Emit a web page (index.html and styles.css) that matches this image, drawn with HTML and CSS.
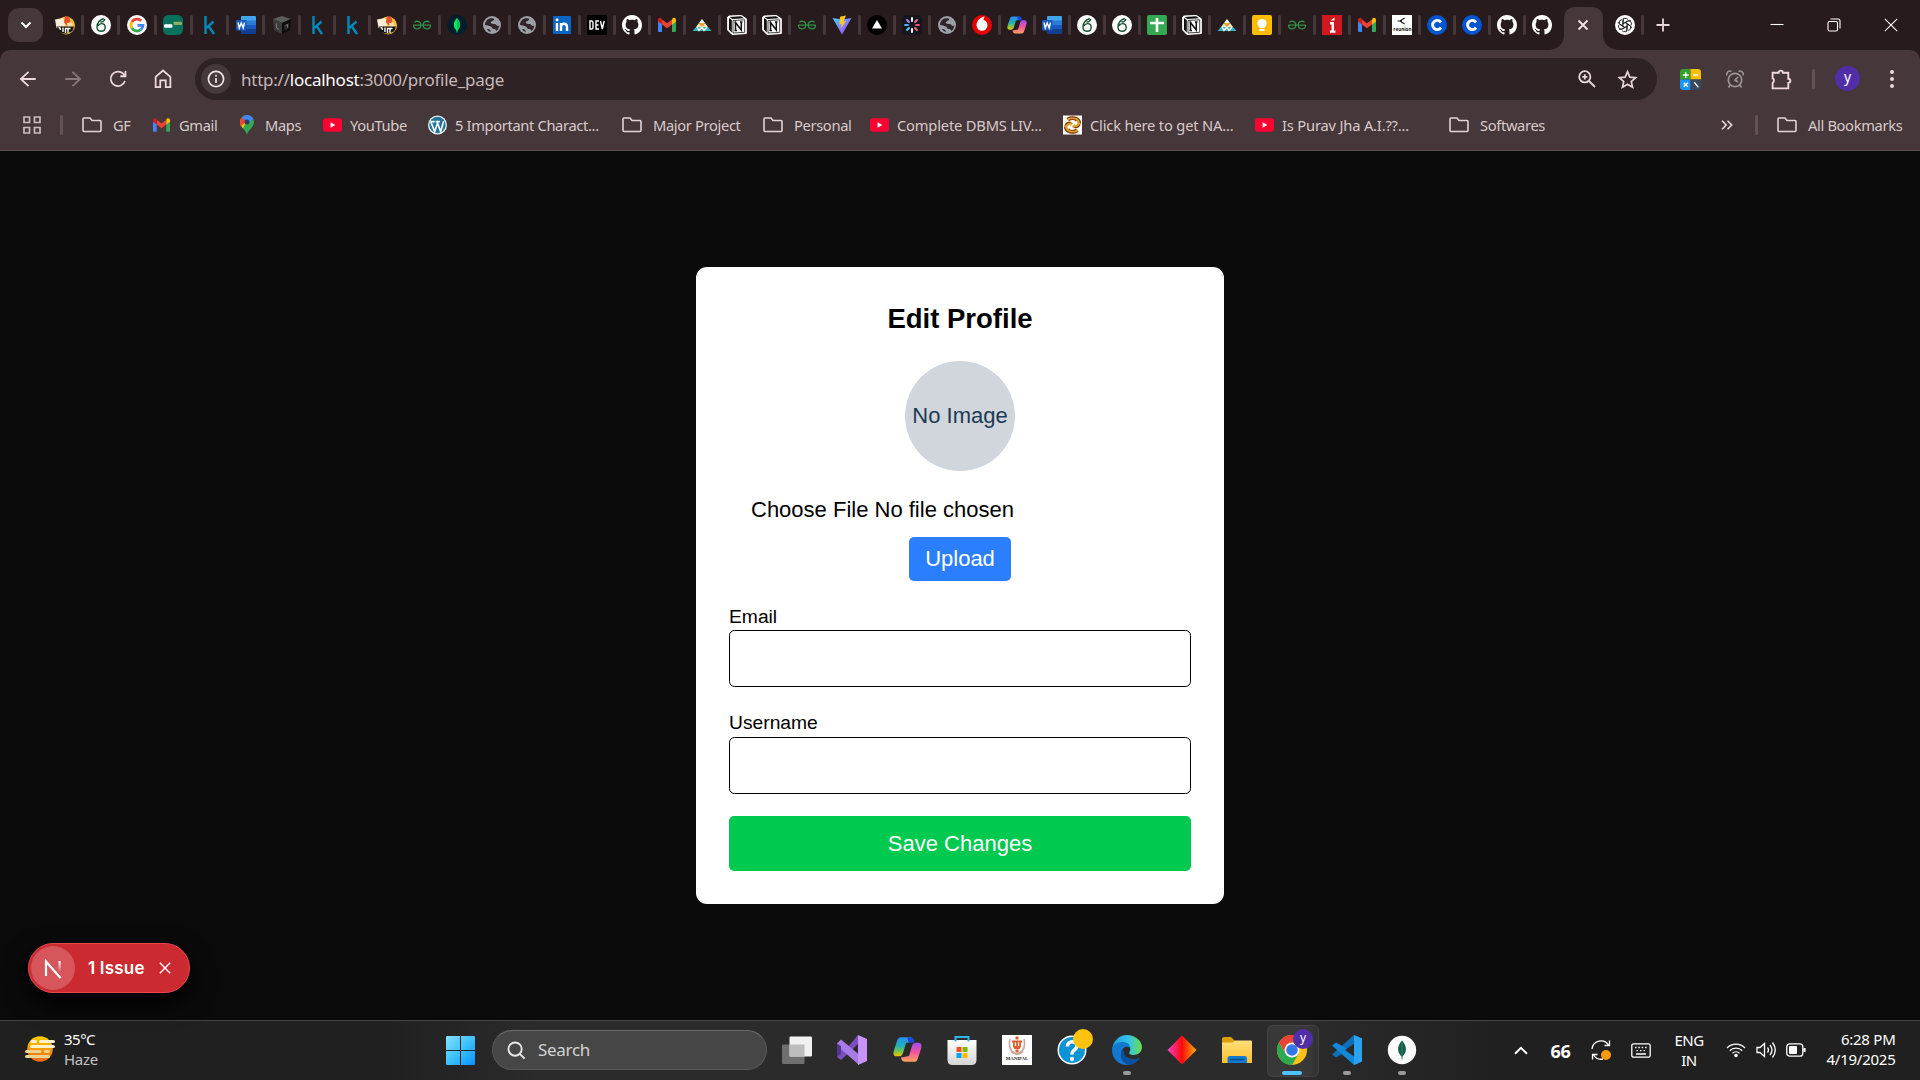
FILE: index.html
```html
<!DOCTYPE html>
<html lang="en">
<head>
<meta charset="utf-8">
<title>Edit Profile</title>
<link rel="stylesheet" href="styles.css">
</head>
<body>
<svg class="sprite" aria-hidden="true">
  <defs>
    <linearGradient id="gCopA" x1="0" y1="0" x2="0" y2="1"><stop offset="0" stop-color="#2a8cf0"/><stop offset=".45" stop-color="#1fb0b8"/><stop offset=".75" stop-color="#7cc24a"/><stop offset="1" stop-color="#f4c800"/></linearGradient>
    <linearGradient id="gCopB" x1="0" y1="0" x2="0" y2="1"><stop offset="0" stop-color="#a04df0"/><stop offset=".5" stop-color="#f0569a"/><stop offset="1" stop-color="#ffa45c"/></linearGradient>
    <linearGradient id="gVite" x1="0" y1="0" x2="1" y2="1"><stop offset="0" stop-color="#41d1ff"/><stop offset="1" stop-color="#bd34fe"/></linearGradient>
    <linearGradient id="gEdge" x1="0" y1="0" x2="1" y2="0"><stop offset="0" stop-color="#1a9fe0"/><stop offset=".55" stop-color="#33c3e8"/><stop offset="1" stop-color="#6be04a"/></linearGradient>
    <linearGradient id="gDia" x1="0" y1="0" x2="1" y2="0"><stop offset="0" stop-color="#ff3fd0"/><stop offset=".5" stop-color="#ff0a0a"/><stop offset="1" stop-color="#ffb000"/></linearGradient>
    <linearGradient id="gWin" x1="0" y1="0" x2="1" y2="1"><stop offset="0" stop-color="#84e0ff"/><stop offset=".5" stop-color="#3cc2fb"/><stop offset="1" stop-color="#0793fb"/></linearGradient>
    <linearGradient id="gFold" x1="0" y1="0" x2="0" y2="1"><stop offset="0" stop-color="#ffe07a"/><stop offset="1" stop-color="#fbc02d"/></linearGradient>
    <linearGradient id="gSun" x1="0" y1="0" x2="0" y2="1"><stop offset="0" stop-color="#ffd000"/><stop offset="1" stop-color="#e8650a"/></linearGradient>
    <linearGradient id="gN" x1="0" y1="0" x2="0" y2="1"><stop offset="0" stop-color="#fff"/><stop offset="1" stop-color="#fff" stop-opacity=".1"/></linearGradient>
    <linearGradient id="gStore" x1="0" y1="0" x2="0" y2="1"><stop offset="0" stop-color="#fff"/><stop offset="1" stop-color="#d5d5d5"/></linearGradient>
    <clipPath id="cPin"><path d="M7 20C6.500 15 0 12.500 0 7a7 7 0 0 1 14 0c0 5.500-6.500 8-7 13z"/></clipPath>
  </defs>
  <symbol id="scout" viewBox="0 0 20 20"><circle cx="11" cy="10.500" r="9" fill="#f5c23a"/><path d="m0 4.500 8-1.500 2.500 7.500-9 2.500z" fill="#f7ecd8"/><path d="M10 1.500h4l1.500 5-3.500 4-3-3z" fill="#e2502c"/><path d="m12 8 4.500-.5 1.500 4-5 1z" fill="#f6dcae"/><path d="M2 11.500h17l-1.500 4.500-5 2.500H8l-5-2z" fill="#171310"/><path d="M3.500 12.500c1.500 0 2 .5 2 2.500M8 12.500v4.500M10.500 18v-4.500h5M13 14v4" stroke="#fff" stroke-width="1.400" fill="none"/></symbol>
  <symbol id="leaf6" viewBox="0 0 20 20"><circle cx="10" cy="10" r="10" fill="#fff"/><path d="M12.800 3.500C8.500 5 6 8.500 6 12c0 2.500 1.500 4.200 4 4.200s4.200-1.700 4.200-4-1.600-3.600-3.600-3.600c-1.500 0-3 1-3.600 2.400M9.500 7c2.500 0 4-1 4.200-3" fill="none" stroke="#14522f" stroke-width="1.400"/></symbol>
  <symbol id="google" viewBox="0 0 20 20"><circle cx="10" cy="10" r="10" fill="#fff"/><g fill="none" stroke-width="2.800"><path d="M14.200 5.800A6 6 0 0 0 4.800 7" stroke="#ea4335"/><path d="M4.800 7a6 6 0 0 0 0 6" stroke="#fbbc05"/><path d="M4.800 13a6 6 0 0 0 9 1.600" stroke="#34a853"/><path d="M13.800 14.600A6 6 0 0 0 16 10.400H10.500" stroke="#4285f4"/></g></symbol>
  <symbol id="teal" viewBox="0 0 20 20"><rect width="20" height="20" rx="5.500" fill="#08705c"/><rect x="1" y="9.300" width="8.500" height="3.400" rx="1.200" fill="#fff"/><rect x="10.500" y="6.700" width="8.500" height="3.200" rx="1.200" fill="#8fae63"/></symbol>
  <symbol id="kk" viewBox="0 0 20 20"><path d="M6.500 1v18M14.500 6.500l-7 6.300M9.500 11l5.500 8" fill="none" stroke="#008abc" stroke-width="2.400"/></symbol>
  <symbol id="word" viewBox="0 0 20 20"><path d="M6 1h13a1 1 0 0 1 1 1v4H5V2a1 1 0 0 1 1-1z" fill="#41a5ee"/><path d="M5 5.500h15V10H5z" fill="#2b7cd3"/><path d="M5 10h15v4.500H5z" fill="#185abd"/><path d="M5 14.500h15V18a1 1 0 0 1-1 1H6a1 1 0 0 1-1-1z" fill="#103f91"/><rect y="5" width="10.500" height="10.500" rx="1" fill="#185abd"/><path d="m2 7.500 1.300 5.500L5.200 8l2 5L8.500 7.500" fill="none" stroke="#fff" stroke-width="1.400"/></symbol>
  <symbol id="cube" viewBox="0 0 20 20"><path d="m10 1 9 3-9 4-9-4z" fill="#5c5c5c"/><path d="m1 4 9 4v11l-8-4z" fill="#3c3c3c"/><path d="m19 4-9 4v11l8-4z" fill="#0c0c0c"/><path d="m12 10 5-2v5l-5 2.500z" fill="#2c2c2c"/><path d="M4.500 8.500v4.500l2.500 1.500M13.500 10.500l2-1v3" stroke="#858585" stroke-width=".8" fill="none"/></symbol>
  <symbol id="gfg" viewBox="0 0 20 20"><path d="M1 10.200h18M2.500 7.400C4 5.700 8.800 5.500 8.800 10c0 4.700-6.800 5.200-7.300 .5M17.500 7.400C16 5.700 11.200 5.500 11.200 10c0 4.700 6.800 5.200 7.300 .5" fill="none" stroke="#2f8d46" stroke-width="1.300"/></symbol>
  <symbol id="mongo" viewBox="0 0 20 20"><circle cx="10" cy="10" r="10" fill="#001e2b"/><path d="M10 3c4 4 4.500 9 0 13-4.500-4-4-9 0-13z" fill="#00ed64"/><path d="M10 4c3.300 4 3.800 8 0 11z" fill="#00b850"/><path d="M10 12v5.500" stroke="#00ed64"/></symbol>
  <symbol id="globe" viewBox="0 0 20 20"><circle cx="10" cy="10" r="9" fill="#9aa0a6"/><path d="M8.800 3.300c3.200-.3 4.500 1 2.500 2.200C9.500 6.500 8 6.800 9.200 8.300c1.500 1.500 4-.3 5 1.500s2.500 1 3 .5c0 2.500-1 4.500-3 5.700-.5-1.700-1.200-2-2.500-2-1.700 0-1.500-2-3-2.500-1.800-.7-3-1.500-5.700-1.500C3 6.500 5.500 3.700 8.800 3.300zM5 14c2 0 3.500 .5 4 2.800C7 16.700 5.800 15.500 5 14z" fill="#32252a"/></symbol>
  <symbol id="linkedin" viewBox="0 0 20 20"><rect x="1" y="1" width="18" height="18" rx="1" fill="#0a66c2"/><path d="M5 8v8M9 16V8M9 12c0-4.500 6-4 6 0v4" fill="none" stroke="#fff" stroke-width="2.400"/><circle cx="5" cy="4.800" r="1.500" fill="#fff"/></symbol>
  <symbol id="dev" viewBox="0 0 20 20"><rect width="20" height="20" rx="1" fill="#000"/><path d="M3 6v8h1.500q1.500 0 1.500-1.500v-5Q6 6 4.500 6zM12 6H9v8h3M9 10h2.500M13.500 6l1.800 8L17.200 6" fill="none" stroke="#fff" stroke-width="1.400"/></symbol>
  <symbol id="github" viewBox="0 0 16 16"><path fill="#fff" d="M8 0C3.580 0 0 3.580 0 8c0 3.540 2.290 6.530 5.470 7.590.4.070.55-.17.55-.38 0-.19-.01-.82-.01-1.490-2.010.37-2.530-.49-2.690-.94-.09-.23-.48-.94-.82-1.130-.28-.15-.68-.52-.01-.53.63-.01 1.080.58 1.230.82.720 1.210 1.870.87 2.330.66.070-.52.280-.87.510-1.070-1.780-.2-3.640-.89-3.640-3.950 0-.87.310-1.590.82-2.150-.08-.2-.36-1.020.08-2.120 0 0 .67-.21 2.200.82.640-.18 1.320-.27 2-.27s1.360.09 2 .27c1.530-1.040 2.200-.82 2.200-.82.440 1.100.160 1.920.080 2.120.510.560.820 1.270.820 2.150 0 3.070-1.870 3.750-3.650 3.950.290.250.540.730.540 1.480 0 1.070-.01 1.930-.01 2.200 0 .210.150.460.550.380A8.010 8.010 0 0 0 16 8c0-4.420-3.580-8-8-8z"/></symbol>
  <symbol id="gmail" viewBox="0 0 20 20"><path d="M1 5v11a1 1 0 0 0 1 1h3V8z" fill="#4285f4"/><path d="M19 5v11a1 1 0 0 1-1 1h-3V8z" fill="#34a853"/><path d="M15 4.500v5l4-3V5c0-2-2-2.700-3.300-1.700z" fill="#fbbc04"/><path d="m5 4.500 5 3.800 5-3.800v5l-5 3.800-5-3.800z" fill="#ea4335"/><path d="M1 5v1.500l4 3v-5l-.7-1.200C3 2.300 1 3 1 5z" fill="#c5221f"/></symbol>
  <symbol id="pyramid" viewBox="0 0 20 20"><path d="m10 4 3 4H7z" fill="#e8f7fb"/><path d="m7 8 3 4H4zM13 8l3 4h-6z" fill="#ffe3b8"/><path d="M7 8h6l-3 4z" fill="#f7a832"/><path d="M4 12h12l3.500 4H.5z" fill="#2fb5c8"/><path d="m5 12 2 3.500 3-3.500 2 3.500 3-3.500" stroke="#fff3dc" fill="none" stroke-width="1.400"/></symbol>
  <symbol id="notion" viewBox="0 0 20 20"><path d="M2 1 14.500.5 19.300 3.800V18.500L5 19.500 .7 15V2z" fill="#fff" stroke="#fff"/><path d="M2.500 2 14 1.300l3 2L5.500 4zM2 3l2.800 2v12.500L2 14.700z" fill="#111"/><path d="M6 5.500 17.700 4.800V17.300L6 18z" fill="#fff" stroke="#111" stroke-width=".8"/><path d="M8.500 15.500v-8l5.800 7.500V7M7.500 7.600h2M7.500 15.600h2.500M13 7h2.500" fill="none" stroke="#111" stroke-width="1.500"/></symbol>
  <symbol id="vite" viewBox="0 0 20 20"><path d="M.5 3 10 19.500 19.500 3l-9 1.500z" fill="url(#gVite)"/><path d="m14 .5-6 1.200-.6 7.800 2.300-.5-.8 4.500 5.300-7.500-2.700.5z" fill="#ffc71f"/></symbol>
  <symbol id="vercel" viewBox="0 0 20 20"><circle cx="10" cy="10" r="10" fill="#000"/><path d="m10 5 5 8.500H5z" fill="#fff"/></symbol>
  <symbol id="spark" viewBox="0 0 20 20"><rect width="20" height="20" rx="5" fill="#14171d"/><g stroke-width="1.900" stroke-linecap="round"><path d="M10 3v3" stroke="#fff"/><path d="m15 5-2 2" stroke="#f06a9b"/><path d="M17 10h-3" stroke="#fb4b74"/><path d="m15 15-2-2" stroke="#ff6b6b"/><path d="M10 17v-3" stroke="#fff"/><path d="m5 15 2-2" stroke="#4ec9f5"/><path d="M3 10h3" stroke="#58a6ff"/><path d="m5 5 2 2" stroke="#b388ff"/></g></symbol>
  <symbol id="voda" viewBox="0 0 20 20"><circle cx="10" cy="10" r="10" fill="#e60000"/><path d="M12.800 1.500C9 2 4.500 5.500 4.500 10.300a5.500 5.500 0 0 0 11 0c0-3-2-5-4-5.400 0-1.200.6-2.500 1.300-3.400z" fill="#fff"/></symbol>
  <symbol id="copilot" viewBox="0 0 20 20"><path d="M5.500 1.500h6c2 0 2.500 1 3 3L9 5.500 7 12c-.6 2-1.500 2.700-3 2.700H2.500C.5 14.700 0 13 .5 11L3 3.500c.4-1.300 1.200-2 2.500-2z" fill="url(#gCopA)"/><path d="M14.500 18.500h-6c-2 0-2.500-1-3-3l5.500-1L13 8c.6-2 1.500-2.700 3-2.700h1.500c2 0 2.500 1.700 2 3.700L17 16.500c-.4 1.300-1.200 2-2.500 2z" fill="url(#gCopB)"/><path d="M10 1.500h2c2 0 2.300 2 3 4-2-.3-3.500.5-4.500-1z" fill="#1849d8"/></symbol>
  <symbol id="sheets" viewBox="0 0 20 20"><rect width="20" height="20" rx="2" fill="#34a853"/><path d="M10 3v14M3 8h14" stroke="#fff" stroke-width="2.600"/></symbol>
  <symbol id="keep" viewBox="0 0 20 20"><rect width="20" height="20" rx="2" fill="#fbbc04"/><circle cx="10" cy="8.500" r="4.600" fill="#fff"/><path d="M7.500 10h5v2.800h-5zM7.500 14h5v2h-5z" fill="#fff"/></symbol>
  <symbol id="redi" viewBox="0 0 20 20"><rect width="20" height="20" fill="#cf1820"/><path d="M8 8.300h2.800V17M8 16.600h5.500" stroke="#fff" stroke-width="2.400" fill="none"/><path d="m8.500 5.500 4-3v3z" fill="#fff"/></symbol>
  <symbol id="cblue" viewBox="0 0 20 20"><circle cx="10" cy="10" r="10" fill="#0056d2"/><path d="M14 7.400a4.600 4.600 0 1 0 0 5.200" stroke="#fff" stroke-width="2.900" fill="none"/></symbol>
  <symbol id="gpt" viewBox="0 0 20 20"><circle cx="10" cy="10" r="10" fill="#fff"/><g fill="none" stroke="#111" stroke-width=".85"><path id="petal" d="M7.800 11.400V6.200a2.900 2.900 0 0 1 5.300-1.600M9.300 8.200l4.300-2.400a2.900 2.900 0 0 1 2.300-.2"/><use href="#petal" transform="rotate(60 10 10)"/><use href="#petal" transform="rotate(120 10 10)"/><use href="#petal" transform="rotate(180 10 10)"/><use href="#petal" transform="rotate(240 10 10)"/><use href="#petal" transform="rotate(300 10 10)"/></g></symbol>
  <symbol id="folder" viewBox="0 0 20 16"><path d="M1 2.500V13.500a1 1 0 0 0 1 1H18a1 1 0 0 0 1-1V4.500a1 1 0 0 0-1-1H10L8 1H2A1 1 0 0 0 1 2z" fill="none" stroke="#e2d3d4" stroke-width="1.600"/></symbol>
  <symbol id="youtube" viewBox="0 0 20 14"><rect width="20" height="14" rx="3" fill="#ff0033"/><path d="m8 4 5 3-5 3z" fill="#fff"/></symbol>
  <symbol id="maps" viewBox="0 0 14 20"><g clip-path="url(#cPin)"><path d="M0 0h14v20H0z" fill="#34a853"/><path d="M0 4h8l-6.500 12H0z" fill="#fbbc04"/><path d="M0 0h5l3 5-7 6-1-1z" fill="#ea4335"/><path d="M3 0h11v3.500L8 8 2 3z" fill="#4285f4"/></g><circle cx="7" cy="7" r="2.500" fill="#2d3c63"/></symbol>
  <symbol id="wp" viewBox="0 0 20 20"><circle cx="10" cy="10" r="10" fill="#e8f1f6"/><circle cx="10" cy="10" r="8.600" fill="#21759b"/><path d="m3 6.500 4 10.500L10 8l3.300 9L16.500 6M2.500 6.500H7M8 6.500h4.500" stroke="#fff" stroke-width="1.700" fill="none"/></symbol>
  <symbol id="naac" viewBox="0 0 20 20"><rect width="20" height="20" fill="#fff"/><path d="M4.500 4.500C9 1 16.500 2.500 17 7.500c.3 4-4 5.500-6.500 3M15.500 15.500C11 19 3.500 17.500 3 12.500c-.3-4 4-5.500 6.500-3" fill="none" stroke="#e0a02c" stroke-width="3.600"/><path d="M4 3C9 0 18 1.500 18.500 8M16 17c-5 3-14 1.500-14.500-5M12 12.500c3 1 5-1 5.500-3M8 7.500c-3-1-5 1-5.500 3M6 5.500c3-2 7-1.500 8 .5M14 14.500c-3 2-7 1.500-8-.5" fill="none" stroke="#7c3813" stroke-width="1.100"/></symbol>
</svg>

<header class="browser">
  <div class="tabstrip">
    <div class="tab-search"><svg viewBox="0 0 12 8"><path d="m1.500 1.500 4.500 4.500 4.500-4.500"/></svg></div>
    <div class="tabs tabs-wide">
      <i class="tab"><svg><use href="#scout"/></svg></i><i class="tab"><svg><use href="#leaf6"/></svg></i><i class="tab"><svg><use href="#google"/></svg></i><i class="tab"><svg><use href="#teal"/></svg></i><i class="tab"><svg><use href="#kk"/></svg></i><i class="tab"><svg><use href="#word"/></svg></i><i class="tab"><svg><use href="#cube"/></svg></i>
    </div>
    <div class="tabs">
      <i class="tab"><svg><use href="#kk"/></svg></i><i class="tab"><svg><use href="#kk"/></svg></i><i class="tab"><svg><use href="#scout"/></svg></i><i class="tab"><svg><use href="#gfg"/></svg></i><i class="tab"><svg><use href="#mongo"/></svg></i><i class="tab"><svg><use href="#globe"/></svg></i><i class="tab"><svg><use href="#globe"/></svg></i><i class="tab"><svg><use href="#linkedin"/></svg></i><i class="tab"><svg><use href="#dev"/></svg></i><i class="tab"><svg><use href="#github"/></svg></i><i class="tab"><svg><use href="#gmail"/></svg></i><i class="tab"><svg><use href="#pyramid"/></svg></i><i class="tab"><svg><use href="#notion"/></svg></i><i class="tab"><svg><use href="#notion"/></svg></i><i class="tab"><svg><use href="#gfg"/></svg></i><i class="tab"><svg><use href="#vite"/></svg></i><i class="tab"><svg><use href="#vercel"/></svg></i><i class="tab"><svg><use href="#spark"/></svg></i><i class="tab"><svg><use href="#globe"/></svg></i><i class="tab"><svg><use href="#voda"/></svg></i><i class="tab"><svg><use href="#copilot"/></svg></i><i class="tab"><svg><use href="#word"/></svg></i><i class="tab"><svg><use href="#leaf6"/></svg></i><i class="tab"><svg><use href="#leaf6"/></svg></i><i class="tab"><svg><use href="#sheets"/></svg></i><i class="tab"><svg><use href="#notion"/></svg></i><i class="tab"><svg><use href="#pyramid"/></svg></i><i class="tab"><svg><use href="#keep"/></svg></i><i class="tab"><svg><use href="#gfg"/></svg></i><i class="tab"><svg><use href="#redi"/></svg></i><i class="tab"><svg><use href="#gmail"/></svg></i><i class="tab"><span class="reunion"><svg viewBox="0 0 10 9"><path d="M8 1 2.500 4.500 8 8M0 4.500h5"/></svg>reunion</span></i><i class="tab"><svg><use href="#cblue"/></svg></i><i class="tab"><svg><use href="#cblue"/></svg></i><i class="tab"><svg><use href="#github"/></svg></i><i class="tab tab-last"><svg><use href="#github"/></svg></i>
    </div>
    <div class="tab-active">
      <svg class="tab-shape" viewBox="0 0 72 43"><path d="M0 43c8 0 16-5 16-15V12Q16 0 28 0H43Q55 0 55 12V28c0 10 8 15 17 15z" fill="#46373a"/></svg>
      <svg class="tab-x" viewBox="0 0 12 12"><path d="m1.500 1.500 9 9m0-9-9 9"/></svg>
    </div>
    <i class="tab tab-gpt"><svg><use href="#gpt"/></svg></i>
    <svg class="tab-new" viewBox="0 0 14 14"><path d="M7 .5v13M.5 7h13"/></svg>
    <div class="winctl">
      <svg viewBox="0 0 14 14"><path d="M.5 6.500h13"/></svg>
      <svg viewBox="0 0 14 14"><rect x="1" y="3.500" width="9.500" height="9.500" rx="1.500"/><path d="M3.500 1H11a2 2 0 0 1 2 2v7.500"/></svg>
      <svg viewBox="0 0 14 14"><path d="m.8.8 12.400 12.400m0-12.400L.8 13.200"/></svg>
    </div>
  </div>

  <div class="toolbar">
    <nav class="navbtns">
      <svg viewBox="0 0 20 20"><path d="M17 10H4m6.500-6.500L3.500 10l7 6.500"/></svg>
      <svg class="dim" viewBox="0 0 20 20"><path d="M3 10h13M9.500 3.500l7 6.500-7 6.500"/></svg>
      <svg viewBox="0 0 20 20"><path d="M16.300 11.800A6.600 6.600 0 1 1 14.700 5.200l2 2M16.800 2.800v4.700h-4.700"/></svg>
      <svg viewBox="0 0 20 20"><path d="M3.300 8 10 2.300 16.700 8V17.300h-4.200v-6h-5v6H3.300z"/></svg>
    </nav>
    <div class="omnibox">
      <span class="info"><svg viewBox="0 0 18 18"><circle cx="9" cy="9" r="7.600"/><path d="M9 8v5M9 4.800v1.800"/></svg></span>
      <span class="url">http://<b>localhost</b>:3000/profile_page</span>
      <svg class="obi" viewBox="0 0 20 20"><circle cx="7.800" cy="7.800" r="5.600"/><path d="m12 12 6 6M7.800 5.200v5.200M5.200 7.800h5.200"/></svg>
      <svg class="obi star" viewBox="0 0 20 20"><path d="m10 2.500 2.200 5.200 5.600.5-4.200 3.700 1.200 5.500L10 14.500l-4.800 2.900 1.200-5.500L2.200 8.200l5.600-.5z"/></svg>
    </div>
    <div class="exts">
      <svg class="calc" viewBox="0 0 20 20"><path d="M3 0h7v10H0V3a3 3 0 0 1 3-3z" fill="#34a02c"/><path d="M10 0h7a3 3 0 0 1 3 3v7H10z" fill="#fdbf00"/><path d="M0 10h10v10H3a3 3 0 0 1-3-3z" fill="#1a94f5"/><path d="M10 10h10v7a3 3 0 0 1-3 3h-7z" fill="#37495a"/><path d="M5.500 3v5.500M2.800 5.700h5.500M12.500 5.700h4.800M3.500 13l4 4m0-4-4 4M13.500 12.500l4 5" stroke="#fff" stroke-width="1.300"/></svg>
      <svg class="alarm" viewBox="0 0 20 20"><circle cx="10" cy="11" r="6.700"/><path d="m13 8-3 3 3 2M5.300 16 3.500 18.500M14.700 16l1.800 2.500M1.700 6.500C1 3.500 4 1 6.500 2.500M18.300 6.500C19 3.500 16 1 13.500 2.500"/></svg>
      <svg class="puzzle" viewBox="0 0 22 22"><path d="M2.500 4.500h5.800a2 2 0 0 1 4 0h5.200v5.800a2 2 0 0 1 0 4v5.200h-15v-5.200a2.700 2.700 0 0 0 0-4.600z"/></svg>
      <i class="vsep"></i>
      <span class="avatar">y</span>
      <svg class="kebab" viewBox="0 0 6 20"><circle cx="3" cy="3" r="2"/><circle cx="3" cy="10" r="2"/><circle cx="3" cy="17" r="2"/></svg>
    </div>
  </div>

  <div class="bookmarks">
    <svg class="apps" viewBox="0 0 18 18"><path d="M1 1h5.500v5.500H1zM11.500 1H17v5.500h-5.500zM1 11.500h5.500V17H1zM11.500 11.500H17V17h-5.500z"/></svg>
    <i class="vsep"></i>
    <a class="bm bm-f"><svg class="fi"><use href="#folder"/></svg><span>GF</span></a>
    <a class="bm"><svg class="ic"><use href="#gmail"/></svg><span>Gmail</span></a>
    <a class="bm bm-m"><svg class="mp"><use href="#maps"/></svg><span>Maps</span></a>
    <a class="bm"><svg class="yt"><use href="#youtube"/></svg><span>YouTube</span></a>
    <a class="bm"><svg class="ic"><use href="#wp"/></svg><span>5 Important Charact...</span></a>
    <a class="bm bm-f"><svg class="fi"><use href="#folder"/></svg><span>Major Project</span></a>
    <a class="bm bm-f"><svg class="fi"><use href="#folder"/></svg><span>Personal</span></a>
    <a class="bm bm-long"><svg class="yt"><use href="#youtube"/></svg><span>Complete DBMS LIV...</span></a>
    <a class="bm bm-long"><svg class="ic"><use href="#naac"/></svg><span>Click here to get NA...</span></a>
    <a class="bm bm-long"><svg class="yt"><use href="#youtube"/></svg><span>Is Purav Jha A.I.??...</span></a>
    <a class="bm bm-f"><svg class="fi"><use href="#folder"/></svg><span>Softwares</span></a>
    <svg class="more" viewBox="0 0 12 10"><path d="m1 .8 4.200 4.200L1 9.200M6.500.8 10.700 5 6.500 9.200"/></svg>
    <i class="vsep"></i>
    <a class="bm bm-f"><svg class="fi"><use href="#folder"/></svg><span>All Bookmarks</span></a>
  </div>
</header>

<main class="page">
  <form class="card">
    <h1>Edit Profile</h1>
    <div class="photo">No Image</div>
    <div class="file">Choose File No file chosen</div>
    <button type="button" class="upload">Upload</button>
    <label for="email">Email</label>
    <input id="email" type="email">
    <label for="user" class="second">Username</label>
    <input id="user" type="text">
    <button type="button" class="save">Save Changes</button>
  </form>
  <div class="issue">
    <span class="nmark"><svg viewBox="0 0 18 20"><path d="M2 17V2.500L16.500 19" fill="none" stroke="#fff" stroke-width="2.200"/><rect x="14.500" y="2" width="2.200" height="10" fill="url(#gN)"/></svg></span>
    <span class="itext">1 Issue</span>
    <svg class="ix" viewBox="0 0 12 12"><path d="m.8.8 10.400 10.400m0-10.400L.8 11.200"/></svg>
  </div>
</main>

<footer class="taskbar">
  <div class="weather">
    <svg viewBox="0 0 30 26"><circle cx="15" cy="13" r="12.800" fill="url(#gSun)"/><g stroke-width="3" stroke-linecap="round"><path d="M7 5.500h3.500M15.500 5.500h13M6.500 10.500h22" stroke="#fff0cc"/><path d="M1.500 15.500h13.500M20.500 15.500h3M1.500 20.500h22" stroke="#eed28f"/></g></svg>
    <div class="wtext"><div>35°C</div><div class="haze">Haze</div></div>
  </div>
  <div class="center">
    <svg class="start" viewBox="0 0 29 29"><path d="M0 1q0-1 1-1h13v14H0zM15 0h13q1 0 1 1v13H15zM0 15h14v14H1q-1 0-1-1zM15 15h14v13q0 1-1 1H15z" fill="url(#gWin)"/></svg>
    <div class="search"><svg viewBox="0 0 20 20"><circle cx="8.500" cy="8.500" r="7"/><path d="m13.500 13.500 5 5"/></svg>Search</div>
    <div class="apps-row">
      <span class="app"><svg viewBox="0 0 30 30"><rect y="9.500" width="22.500" height="19.500" rx="1" fill="#6f6f6f"/><rect x="7.500" y="1.500" width="22.500" height="20" rx="1" fill="#f1f1f1"/><path d="M7.500 9.500h15v12h-15z" fill="#bdbdbd"/></svg></span>
      <span class="app"><svg viewBox="0 0 30 30"><path d="M0 8.500 4 5.500 11 12l10-12v9L4 25l-4-3z" fill="#7b4fc0"/><path d="M0 8.500 4 4.500l18 15V30L0 10.500z" fill="#a97be8"/><path d="M0 8.500v13.500l4-3v-8z" fill="#56358f"/><path d="m21 0 9 4v22l-9 4z" fill="#c792fa"/></svg></span>
      <span class="app"><svg class="cp" viewBox="0 0 20 20"><use href="#copilot"/></svg></span>
      <span class="app"><svg viewBox="0 0 30 30"><path d="M.5 5h29v20q0 5-5 5h-19q-5 0-5-5z" fill="url(#gStore)"/><path d="M8.500 6.500V2h13v4.500" fill="none" stroke="#2fb4ee" stroke-width="2"/><path d="M9.500 12h5v5h-5z" fill="#f25022"/><path d="M15.500 12h5v5h-5z" fill="#7fba00"/><path d="M9.500 18h5v5h-5z" fill="#00a4ef"/><path d="M15.500 18h5v5h-5z" fill="#ffb900"/></svg></span>
      <span class="app"><span class="manipal"><svg viewBox="0 0 30 21"><path d="M8 4c-2 9 1 13 7 15M22 4c2 9-1 13-7 15M9 16.500q6 6 12 0" fill="none" stroke="#c9a8a2" stroke-width="1.600"/><path d="M10 5.500h10v2H10zM11 7.500v4q1 3 3 3h2q2 0 3-3v-4h-1.800v3.500h-1.300V7.500h-1.800v3.500h-1.300V7.500zM13.500 1.500h3v3h-3zM13.500 15h3v2.500h-3z" fill="#dd5f2c"/></svg>MANIPAL</span></span>
      <span class="app"><svg viewBox="0 0 30 30"><circle cx="15" cy="15" r="14.500" fill="#fff"/><circle cx="15" cy="15" r="13" fill="#0a94d6"/><path d="M10.500 11.500c0-6.500 9.500-6 9.500-.5 0 4-5 3.500-5 8.500" fill="none" stroke="#fff" stroke-width="3.500"/><circle cx="15" cy="24" r="2.200" fill="#fff"/></svg><i class="dot"></i></span>
      <span class="app run"><svg viewBox="0 0 30 30"><path d="M0 15C1 6 7 0 15 0s15 6 15 12c0 5-4 8-8.500 8-3.500 0-5-1.500-4-3 1.500-2 1-5-1.500-7C11 7 2 8 0 15z" fill="url(#gEdge)"/><path d="M0 15C1 9 6 7 10.500 7c4 0 7.500 2 8 6-5-3.500-11 1-8 7 3 5.500 10 7 17 2.500C24 28 19 30 15 30 7 30 0 24 0 15z" fill="#1279cf"/><path d="M11 14c-5 6-1 14 5.500 16C21 30 25.500 27 28 22.500 21 26 13 23 12 18z" fill="#0c4fa0"/></svg></span>
      <span class="app"><svg viewBox="0 0 30 30"><path d="m15 .5 14.500 14.500L15 29.500.5 15z" fill="url(#gDia)"/></svg></span>
      <span class="app"><svg viewBox="0 0 30 30"><path d="M0 4q0-2 2-2h7l3.500 3.500V10H0z" fill="#dc9f07"/><path d="M0 7.500h10.500l2.500-2H29q1 0 1 1V28H0z" fill="url(#gFold)"/><path d="M5.500 28v-4.500q0-2.500 2.500-2.500h14.500q2.500 0 2.500 2.500V28z" fill="#1279cf"/><path d="M9 24.500h12.500" stroke="#0a4d8c" stroke-width="1.500" stroke-linecap="round"/></svg></span>
      <span class="app active"><svg viewBox="0 0 30 30"><circle cx="15" cy="15" r="15" fill="#fbc116"/><path d="M15 15 8.500 18.700 2 7.500A15 15 0 0 1 28 7.500H15z" fill="#ea4335"/><path d="M2 7.500A15 15 0 0 0 15 30l6.500-11.200H8.500z" fill="#2da94f"/><circle cx="15" cy="15" r="7.500" fill="#fff"/><circle cx="15" cy="15" r="5.800" fill="#3478e5"/></svg><i class="ybadge">y</i></span>
      <span class="app run"><svg viewBox="0 0 30 30"><path d="m22 0 8 3.500V8L4 22.500 0 19.500z" fill="#0b70b8"/><path d="m0 10.500 4-3L30 22v4.500L22 30z" fill="#1288d8"/><path d="m22 0 8 3.500v23L22 30z" fill="#2ba4f0"/><path d="M22 8.500v13L13 15z" fill="#2a2a2a"/></svg></span>
      <span class="app run"><svg viewBox="0 0 30 30"><circle cx="15" cy="15" r="14.200" fill="#fafafa"/><path d="M15 5.500c5.500 6 5 12 0 16.500-5-4.500-5.500-10.500 0-16.500z" fill="#116149"/><path d="M15 8v16.500" stroke="#3d8069" stroke-width="1"/></svg></span>
    </div>
  </div>
  <div class="tray">
    <svg class="chev" viewBox="0 0 14 9"><path d="m1 7.800 6-6 6 6"/></svg>
    <span class="temp">66</span>
    <svg class="sync" viewBox="0 0 20 20"><path d="M1 9a9 9 0 0 1 16.500-4M18.500.5v5h-5M12 19a9 9 0 0 1-9.500-4M1.500 19.500v-5h5"/><circle cx="15" cy="15" r="5" fill="#ff9a0a" stroke="none"/></svg>
    <svg class="kbd" viewBox="0 0 20 15"><rect x=".8" y=".8" width="18.400" height="13.400" rx="1.800"/><path d="M4 4.500h1.500M7.300 4.500h1.500M10.600 4.500h1.500M14 4.500h1.500M5.500 7.600H7M9 7.600h1.500M12.500 7.600H14M5 11h10"/></svg>
    <div class="lang">ENG<br>IN</div>
    <svg class="wifi" viewBox="0 0 20 16"><path d="M1 6a12.500 12.500 0 0 1 18 0M3.800 8.800a8.700 8.700 0 0 1 12.400 0M6.500 11.300a5 5 0 0 1 7 0"/><circle cx="10" cy="13.500" r="1.800" fill="#fff" stroke="none"/></svg>
    <svg class="vol" viewBox="0 0 20 18"><path d="M1 6.500v5h3l4.500 4V2.500L4 6.500zM11.500 6.500q2 2.500 0 5M14 4q4 5 0 10M16.500 1.500q5.500 7.500 0 15"/></svg>
    <svg class="bat" viewBox="0 0 20 14"><rect x=".8" y=".8" width="16" height="12.400" rx="3"/><rect x="3" y="3" width="8" height="8" rx="1" fill="#fff" stroke="none"/><path d="M18.500 5v4" stroke-width="2.200"/></svg>
    <div class="clock">6:28 PM<br>4/19/2025</div>
  </div>
</footer>
</body>
</html>
```
FILE: styles.css
```css
* { box-sizing: border-box; }
body { margin: 0; width: 1920px; height: 1080px; display: flex; flex-direction: column; overflow: hidden; background: #0a0a0a; font-family: "Noto Sans", "Open Sans", sans-serif; }
svg { display: block; flex: none; }
.sprite { position: absolute; width: 0; height: 0; }

/* browser chrome */
.browser { height: 151px; flex: none; background: #281b1d; display: flex; flex-direction: column; }
.tabstrip { height: 50px; flex: none; display: flex; align-items: center; padding-left: 8px; }
.tab-search { width: 35px; height: 34px; border-radius: 11px; background: #46373a; display: flex; align-items: center; justify-content: center; margin-right: 3.600px; }
.tab-search svg { width: 12px; height: 8px; fill: none; stroke: #fff; stroke-width: 2; }
.tabs { display: flex; }
.tab { width: 35px; height: 20px; display: flex; align-items: center; justify-content: center; position: relative; flex: none; }
.tabs-wide .tab { width: 36.200px; }
.tab svg { width: 20px; height: 20px; }
.tab::after { content: ""; position: absolute; right: -1.500px; top: 0; width: 3px; height: 20px; border-radius: 2px; background: #46383a; }
.tab-last::after { display: none; }
.reunion { width: 20px; height: 20px; background: #fff; color: #111; display: flex; flex-direction: column; align-items: center; padding-top: 2px; font: 700 4.600px/6px "Open Sans", sans-serif; }
.tab .reunion svg { width: 10px; height: 8px; margin-bottom: 1px; fill: none; stroke: #222; stroke-width: 1.300; }
.tab-active { width: 47px; height: 50px; display: flex; align-items: center; justify-content: center; position: relative; }
.tab-shape { position: absolute; left: -12px; top: 7px; width: 72px; height: 43px; }
.tab-x { width: 12px; height: 12px; position: relative; fill: none; stroke: #f3e3e4; stroke-width: 1.800; }
.tab-gpt { margin-left: .5px; }
.tab-new { width: 14px; height: 14px; margin-left: 14px; stroke: #e9d6d9; stroke-width: 1.800; }
.winctl { display: flex; gap: 43px; margin-left: auto; padding-right: 22px; }
.winctl svg { width: 14px; height: 14px; fill: none; stroke: #fff; stroke-width: 1.100; }

.toolbar { height: 58px; flex: none; background: #46373a; border-radius: 10px 10px 0 0; display: flex; align-items: center; padding: 0 8px 0 17px; }
.navbtns { display: flex; gap: 23px; width: 178px; }
.navbtns svg { width: 22px; height: 22px; fill: none; stroke: #edd9dc; stroke-width: 1.600; }
.navbtns .dim { stroke: #88777a; }
.omnibox { width: 1462px; height: 42px; border-radius: 21px; background: #2e2224; display: flex; align-items: center; padding: 0 19px 0 6px; }
.info { width: 30px; height: 30px; border-radius: 50%; background: #46393b; display: flex; align-items: center; justify-content: center; margin-right: 10px; }
.info svg { width: 18px; height: 18px; fill: none; stroke: #f0e2e3; stroke-width: 1.700; }
.url { font-size: 17px; letter-spacing: -.24px; color: #c6b8ba; flex: 1; white-space: nowrap; }
.url b { font-weight: 400; color: #fff; }
.obi { width: 20px; height: 20px; fill: none; stroke: #e6d6d8; stroke-width: 1.800; }
.star { margin-left: 20px; width: 21px; height: 21px; stroke-width: 1.600; }
.exts { display: flex; align-items: center; }
.calc { width: 21px; height: 21px; margin-left: 23px; }
.alarm { width: 20px; height: 20px; margin-left: 24px; fill: none; stroke: #9b9597; stroke-width: 1.700; }
.puzzle { width: 23px; height: 23px; margin-left: 25px; fill: none; stroke: #efd9dc; stroke-width: 1.800; }
.vsep { width: 3px; height: 20px; background: #645356; border-radius: 2px; }
.exts .vsep { margin-left: 19px; }
.avatar { width: 25px; height: 25px; margin: -2px 0 0 20px; border-radius: 50%; background: #512da8; color: #fff; font-size: 14px; line-height: 22px; text-align: center; }
.kebab { width: 6px; height: 20px; margin-left: 29px; fill: #ead8da; }

.bookmarks { flex: 1; background: #46373a; border-bottom: 1px solid #5e5053; padding: 0 0 8px 23px; display: grid; align-items: center; grid-template-columns: 37px 22px 70px 88px 83px 105px 194px 141px 107px 193px 192px 194px 272px 34px 22px 130px; color: #d9caca; font-size: 14.700px; }
.apps { width: 18px; height: 18px; fill: none; stroke: #cbbdbf; stroke-width: 1.700; }
.bm { display: flex; align-items: center; gap: 8px; white-space: nowrap; letter-spacing: -.35px; }
.bm span { margin-top: -1px; }
.bm-long { letter-spacing: -.18px; }
.bm-f, .bm-m { gap: 11px; }
.ic { width: 19px; height: 20px; }
.fi { width: 20px; height: 16px; }
.yt { width: 19px; height: 14px; }
.mp { width: 14px; height: 20px; }
.more { width: 12px; height: 10px; fill: none; stroke: #ead8da; stroke-width: 1.600; }

/* page */
.page { flex: 1; display: flex; justify-content: center; align-items: flex-start; padding-top: 116px; position: relative; font-family: "Liberation Sans", Arial, sans-serif; }
.card { width: 528px; height: 637px; background: #fff; border-radius: 11px; padding: 34px 33px 32px; display: flex; flex-direction: column; color: #000; }
h1 { margin: 0; font-size: 27.500px; line-height: 35px; text-align: center; }
.photo { width: 110px; height: 110px; border-radius: 50%; background: #d1d5dc; color: #1e3a52; align-self: center; margin-top: 25px; font-size: 22px; display: flex; align-items: center; justify-content: center; white-space: nowrap; }
.file { font-size: 22px; line-height: 33px; margin: 22px 0 0 22px; }
.upload { align-self: center; width: 102px; height: 44px; margin-top: 11px; }
.upload, .save { border: 0; padding: 0; border-radius: 5px; color: #fff; background: #2b7fff; font: 22px "Liberation Sans", Arial, sans-serif; }
.save { background: #00c950; height: 55px; margin-top: 22px; }
label { font-size: 19.250px; line-height: 27px; margin-top: 22px; }
.second { line-height: 28px; }
input { height: 57px; border: 1px solid #000; border-radius: 5.500px; background: #fff; padding: 11px; margin: 0; }

.issue { position: absolute; left: 28px; bottom: 27px; width: 162px; height: 50px; border-radius: 25px; background: #ca2a30; border: 1.500px solid #e5484d; display: flex; align-items: center; padding-left: 2px; box-shadow: 0 10px 24px #000; }
.nmark { width: 44px; height: 44px; border-radius: 50%; background: #d6565b; display: flex; align-items: center; justify-content: center; }
.nmark svg { width: 18px; height: 20px; margin-top: 1px; }
.itext { color: #fff; font: 600 17px Inter, sans-serif; letter-spacing: .2px; margin-left: 13px; width: 71px; }
.ix { width: 12px; height: 12px; stroke: #fff; stroke-width: 1.400; }

/* taskbar */
.taskbar { height: 60px; flex: none; border-top: 1px solid #454545; background: linear-gradient(90deg, #202020 20%, #2b2b2b 28%, #2b2b2b 68%, #202020 78%); display: flex; align-items: center; color: #fff; font-size: 15px; line-height: 20px; }
.weather { display: flex; width: 446px; padding-left: 25px; gap: 9px; align-items: center; letter-spacing: -.5px; }
.weather svg { width: 30px; height: 26px; margin-top: -3px; }
.wtext { margin-top: -4px; }
.haze { color: #c4c4c4; letter-spacing: -.3px; }
.center { display: flex; align-items: center; width: 1068px; }
.start { width: 29px; height: 29px; }
.search { width: 275px; height: 40px; margin: -1px 2.500px 0 17px; border-radius: 20px; background: #464646; border: 1px solid #575757; border-top-color: #6d6d6d; display: flex; align-items: center; gap: 12px; padding-left: 14px; font-size: 17px; letter-spacing: -.3px; color: #d2d2d2; }
.search svg { width: 19px; height: 19px; fill: none; stroke: #e8e8e8; stroke-width: 2; }
.apps-row { display: flex; margin-top: -2px; }
.app { width: 55px; height: 50px; display: flex; align-items: center; justify-content: center; position: relative; }
.app svg { width: 30px; height: 30px; position: relative; }
.app .cp { width: 29px; height: 29px; }
.manipal { width: 30px; height: 30px; background: #fff; color: #222; display: flex; flex-direction: column; align-items: center; font: 700 4.800px/6px "Liberation Serif", serif; }
.app .manipal svg { width: 30px; height: 21px; }
.run::after, .active::after { content: ""; position: absolute; bottom: 0; left: 23.500px; width: 8px; height: 4px; border-radius: 2px; background: #9a9a9a; }
.active::after { left: 17.500px; width: 20px; background: #4cc2ff; }
.active::before { content: ""; position: absolute; left: 2.500px; top: 0; width: 50px; height: 50px; border-radius: 6px; background: #383838; border: 1px solid #444; box-shadow: inset -5px 0 #333; }
.dot { position: absolute; left: 28.500px; top: 4px; width: 20px; height: 20px; border-radius: 50%; background: #ffc20e; }
.ybadge { position: absolute; left: 28.500px; top: 4px; width: 20px; height: 20px; border-radius: 50%; background: #512da8; font: 12px/17px "Noto Sans", sans-serif; text-align: center; }
.tray { display: flex; align-items: center; flex: 1; padding-right: 24.500px; }
.tray svg { fill: none; stroke: #fff; stroke-width: 1.300; margin-top: -1px; }
.tray .chev { width: 14px; height: 9px; stroke-width: 2; }
.temp { font-size: 18px; font-weight: 700; margin-left: 22.500px; width: 20.500px; margin-top: 1px; letter-spacing: -.3px; }
.sync { width: 20px; height: 20px; margin-left: 20px; }
.kbd { width: 20px; height: 15px; margin-left: 20px; }
.lang { width: 34px; margin-left: 21px; text-align: center; letter-spacing: -.5px; margin-top: -2px; }
.wifi { width: 20px; height: 16px; margin-left: 20px; }
.vol { width: 20px; height: 18px; margin-left: 10px; }
.bat { width: 20px; height: 14px; margin-left: 10px; }
.clock { margin-left: auto; text-align: right; letter-spacing: -.25px; white-space: nowrap; margin-top: -4px; }
```
